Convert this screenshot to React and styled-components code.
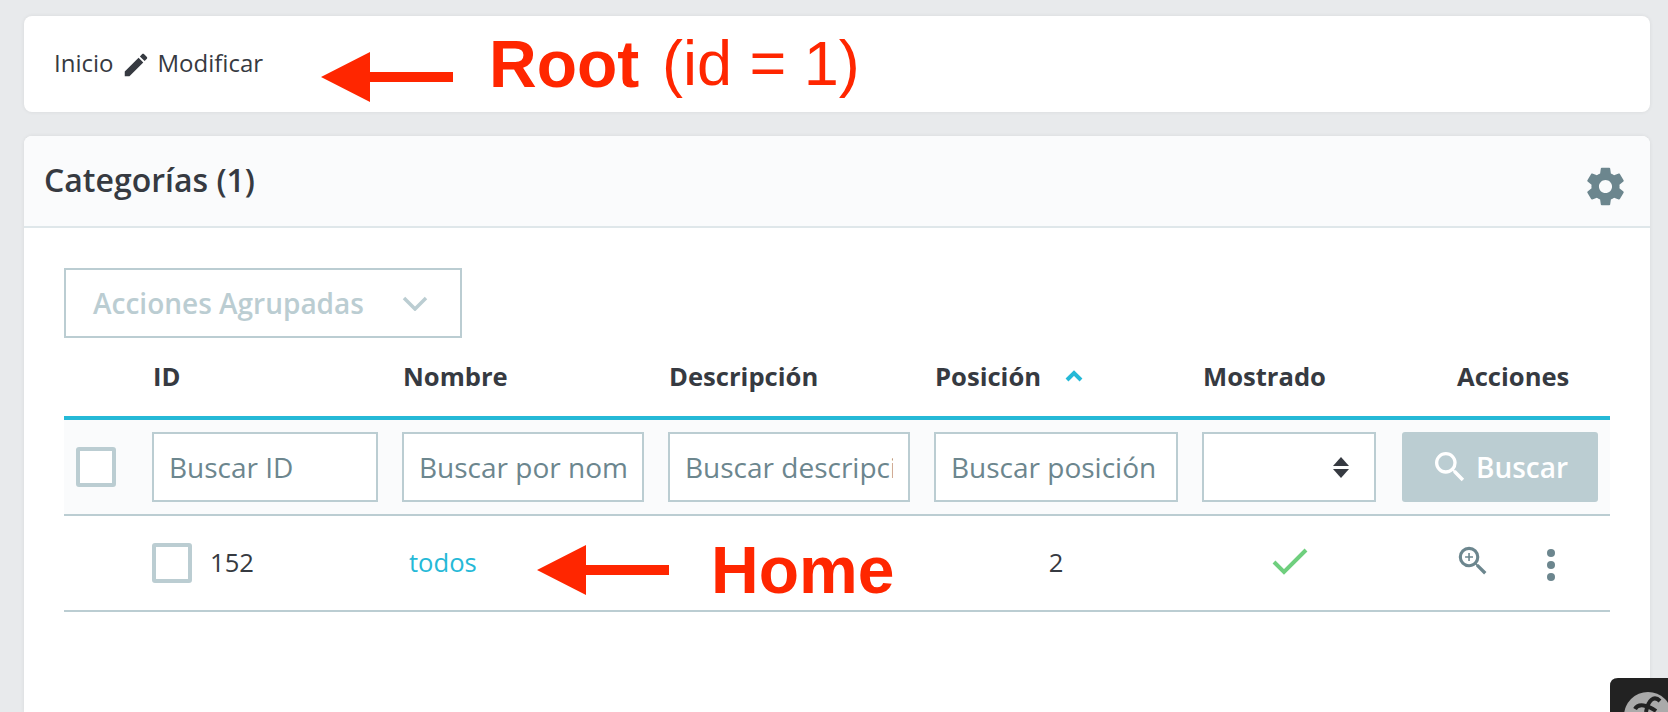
import styled, { createGlobalStyle, css } from "styled-components";

const GlobalStyle = createGlobalStyle`
    html, body {
        margin: 0;
        height: 712px;
        overflow: hidden;
        background: #e8eaec;
        font-family: "Open Sans", "Liberation Sans", sans-serif;
        color: #363a41;
    }
    * { box-sizing: border-box; }
`

const PAGE = styled.div`
    position: relative;
    height: 712px;
    padding: 16px 18px 0 24px;
    display: flex;
    flex-direction: column;
    gap: 24px;
    overflow: hidden;
`

const CARD = styled.section`
    background: #fff;
    border-radius: 8px;
    box-shadow: 0 0 4px rgba(0, 0, 0, .07);
`

const BREADCRUMB = styled(CARD)`
    height: 96px;
    padding: 0 30px 4px;
    display: flex;
    align-items: center;
    font-size: 24px;
`

const PENCIL = styled.svg`
    width: 30px;
    height: 30px;
    margin: 5px 6px 0 8px;
    fill: #363a41;
`

const LISTCARD = styled(CARD)`
    flex: 1;
    border-radius: 8px 8px 0 0;
`

const CARDHEADER = styled.header`
    height: 92px;
    padding: 0 21px 0 20px;
    display: flex;
    align-items: center;
    justify-content: space-between;
    background: #fafbfc;
    border-bottom: 2px solid #dfe7ea;
    border-radius: 8px 8px 0 0;
`

const TITLE = styled.h2`
    margin: 0 0 4px;
    font-size: 32px;
    font-weight: 600;
`

const GEAR = styled.svg`
    width: 45px;
    height: 45px;
    margin: 10px 1px 0 0;
    fill: #6c868e;
`

const CARDBODY = styled.div`
    padding: 40px 40px 0;
`

const BULK = styled.div`
    width: 398px;
    height: 70px;
    padding: 0 32px 0 27px;
    display: flex;
    align-items: center;
    justify-content: space-between;
    border: 2px solid #bbcdd2;
    font-size: 28px;
    font-weight: 600;
    color: #bbcdd2;
`

const columns = css`
    display: grid;
    grid-template-columns: 52px 226px 242px 242px 244px 176px 196px;
    column-gap: 24px;
    align-items: center;
    padding: 0 12px;
`

const HEADROW = styled.div`
    ${columns}
    height: 82px;
    padding-bottom: 2px;
    border-bottom: 4px solid #25b9d7;
    font-size: 25.6px;
    font-weight: 700;
`

const HEADCELL = styled.div`
    padding-left: ${(props) => props.$indent || 0}px;
    display: flex;
    align-items: center;
    gap: 24px;
`

const FILTERROW = styled.div`
    ${columns}
    height: 96px;
    background: #fafbfc;
    border-bottom: 2px solid #bbcdd2;
`

const CHECKBOX = styled.span`
    display: block;
    flex: none;
    width: 40px;
    height: 40px;
    background: #fff;
    border: 4px solid #bbcdd2;
    border-radius: 3px;
`

const ROWCHECKBOX = styled(CHECKBOX)`
    margin-top: 2px;
`

const SEARCHINPUT = styled.input`
    width: 100%;
    height: 70px;
    padding: 0 15px;
    background: #fff;
    border: 2px solid #bbcdd2;
    border-radius: 0;
    outline: none;
    font-family: inherit;
    font-size: 28px;
    color: #6c868e;

    &::placeholder {
        color: #6c868e;
        opacity: 1;
    }
`

const SORTSELECT = styled.div`
    width: 174px;
    height: 70px;
    padding-right: 25px;
    display: flex;
    flex-direction: column;
    align-items: flex-end;
    justify-content: center;
    gap: 3px;
    background: #fff;
    border: 2px solid #bbcdd2;
`

const CARET = styled.span`
    width: 0;
    height: 0;
    border-left: 8px solid transparent;
    border-right: 8px solid transparent;
    ${(props) => props.$up
        ? "border-bottom: 9px solid #363a41;"
        : "border-top: 9px solid #363a41;"}
`

const SEARCHBUTTON = styled.button`
    height: 70px;
    padding: 0 2px 0 0;
    display: flex;
    align-items: center;
    justify-content: center;
    gap: 6px;
    background: #bbcdd2;
    border: 0;
    border-radius: 3px;
    font-family: inherit;
    font-size: 28px;
    font-weight: 600;
    color: #fff;
`

const SEARCHICON = styled.svg`
    width: 40px;
    height: 40px;
    fill: #fff;
`

const DATAROW = styled.div`
    ${columns}
    height: 96px;
    padding-bottom: 2px;
    border-bottom: 2px solid #bbcdd2;
    font-size: 25.6px;
`

const IDCELL = styled.div`
    display: flex;
    align-items: center;
    gap: 18px;
`

const LINK = styled.a`
    padding-left: 7px;
    color: #25b9d7;
`

const CENTERED = styled.div`
    display: flex;
    justify-content: center;
`

const ROWACTIONS = styled.div`
    display: flex;
    align-items: center;
    padding-left: 52px;
    gap: 55px;
`

const ZOOMICON = styled.svg`
    width: 38px;
    height: 38px;
    margin-bottom: 2px;
    fill: #6c868e;
`

const DOTS = styled.svg`
    width: 8px;
    height: 32px;
    margin-top: 6px;
    fill: #6c868e;
`

const ANNOTATION = styled.div`
    position: absolute;
    left: ${(props) => props.$left}px;
    top: ${(props) => props.$top}px;
    font-family: "Liberation Sans", Arial, sans-serif;
    font-size: ${(props) => props.$size}px;
    font-weight: ${(props) => props.$weight || 400};
    line-height: 1;
    color: #ff2600;
    white-space: nowrap;
`

const ARROW = styled.svg`
    position: absolute;
    left: ${(props) => props.$left}px;
    top: ${(props) => props.$top}px;
    fill: #ff2600;
`

const PROFILERBADGE = styled.svg`
    position: absolute;
    right: 0;
    bottom: 0;
    width: 58px;
    height: 34px;
`

const pencilPath = "M3 17.25V21h3.75L17.81 9.94l-3.75-3.75L3 17.25zM20.71 7.04c.39-.39.39-1.02 0-1.41l-2.34-2.34c-.39-.39-1.02-.39-1.41 0l-1.83 1.83 3.75 3.75 1.83-1.83z"
const gearPath = "M19.43 12.98c.04-.32.07-.64.07-.98s-.03-.66-.07-.98l2.11-1.65c.19-.15.24-.42.12-.64l-2-3.46c-.12-.22-.39-.3-.61-.22l-2.49 1c-.52-.4-1.08-.73-1.69-.98l-.38-2.65C14.46 2.18 14.25 2 14 2h-4c-.25 0-.46.18-.49.42l-.38 2.65c-.61.25-1.17.59-1.69.98l-2.49-1c-.23-.09-.49 0-.61.22l-2 3.46c-.13.22-.07.49.12.64l2.11 1.65c-.04.32-.07.65-.07.98s.03.66.07.98l-2.11 1.65c-.19.15-.24.42-.12.64l2 3.46c.12.22.39.3.61.22l2.49-1c.52.4 1.08.73 1.69.98l.38 2.65c.03.24.24.42.49.42h4c.25 0 .46-.18.49-.42l.38-2.65c.61-.25 1.17-.59 1.69-.98l2.49 1c.23.09.49 0 .61-.22l2-3.46c.12-.22.07-.49-.12-.64l-2.11-1.65zM12 15.5c-1.93 0-3.5-1.57-3.5-3.5s1.57-3.5 3.5-3.5 3.5 1.57 3.5 3.5-1.57 3.5-3.5 3.5z"
const searchPath = "M15.5 14h-.79l-.28-.27A6.471 6.471 0 0 0 16 9.5 6.5 6.5 0 1 0 9.5 16c1.61 0 3.09-.59 4.23-1.57l.27.28v.79l5 4.99L20.49 19l-4.99-5zm-6 0C7.01 14 5 11.99 5 9.5S7.01 5 9.5 5 14 7.01 14 9.5 11.99 14 9.5 14z"
const zoomPlusPath = "M12 10h-2v2H9v-2H7V9h2V7h1v2h2v1z"

function Arrow ({left, top, width}) {
    return (
        <ARROW $left = {left} $top = {top} width = {width} height = "50" viewBox = {`0 0 ${width} 50`}>
            <path d = {`M0 25 L49 0 V20 H${width} V30 H49 V50 Z`} />
        </ARROW>
    )
}

function App () {
    const filters = ["Buscar ID", "Buscar por nombre", "Buscar descripción", "Buscar posición"]

    return (
        <PAGE>
            <GlobalStyle />
            <BREADCRUMB>
                Inicio
                <PENCIL viewBox = "0 0 24 24"><path d = {pencilPath} /></PENCIL>
                Modificar
            </BREADCRUMB>

            <LISTCARD>
                <CARDHEADER>
                    <TITLE>Categorías (1)</TITLE>
                    <GEAR viewBox = "0 0 24 24"><path d = {gearPath} /></GEAR>
                </CARDHEADER>
                <CARDBODY>
                    <BULK>
                        Acciones Agrupadas
                        <svg width = "26" height = "15" viewBox = "0 0 26 15" fill = "none" stroke = "#bbcdd2" strokeWidth = "3.5">
                            <path d = "M2 2 L13 13 L24 2" />
                        </svg>
                    </BULK>

                    <HEADROW>
                        <div />
                        <HEADCELL $indent = {1}>ID</HEADCELL>
                        <HEADCELL $indent = {1}>Nombre</HEADCELL>
                        <HEADCELL $indent = {1}>Descripción</HEADCELL>
                        <HEADCELL $indent = {1}>
                            Posición
                            <svg width = "18" height = "12" viewBox = "0 0 18 12" fill = "none" stroke = "#25b9d7" strokeWidth = "4">
                                <path d = "M2 10 L9 3 L16 10" />
                            </svg>
                        </HEADCELL>
                        <HEADCELL $indent = {1}>Mostrado</HEADCELL>
                        <HEADCELL $indent = {55}>Acciones</HEADCELL>
                    </HEADROW>

                    <FILTERROW>
                        <CHECKBOX />
                        {filters.map((filter) => (
                            <SEARCHINPUT key = {filter} placeholder = {filter} />
                        ))}
                        <SORTSELECT>
                            <CARET $up />
                            <CARET />
                        </SORTSELECT>
                        <SEARCHBUTTON>
                            <SEARCHICON viewBox = "0 0 24 24"><path d = {searchPath} /></SEARCHICON>
                            Buscar
                        </SEARCHBUTTON>
                    </FILTERROW>

                    <DATAROW>
                        <div />
                        <IDCELL><ROWCHECKBOX />152</IDCELL>
                        <LINK>todos</LINK>
                        <div />
                        <CENTERED>2</CENTERED>
                        <CENTERED>
                            <svg width = "36" height = "28" viewBox = "0 0 36 28" fill = "none" stroke = "#6fcf7e" strokeWidth = "4">
                                <path d = "M2 14 L12 24 L34 2" />
                            </svg>
                        </CENTERED>
                        <ROWACTIONS>
                            <ZOOMICON viewBox = "0 0 24 24">
                                <path d = {searchPath} />
                                <path d = {zoomPlusPath} />
                            </ZOOMICON>
                            <DOTS viewBox = "0 0 8 32">
                                <circle cx = "4" cy = "4" r = "4" />
                                <circle cx = "4" cy = "16" r = "4" />
                                <circle cx = "4" cy = "28" r = "4" />
                            </DOTS>
                        </ROWACTIONS>
                    </DATAROW>
                </CARDBODY>
            </LISTCARD>

            <Arrow left = {321} top = {52} width = {132} />
            <ANNOTATION $left = {489} $top = {31} $size = {66} $weight = {700}>Root</ANNOTATION>
            <ANNOTATION $left = {662} $top = {32} $size = {63}>(id = 1)</ANNOTATION>
            <Arrow left = {537} top = {545} width = {132} />
            <ANNOTATION $left = {711} $top = {537} $size = {66} $weight = {700}>Home</ANNOTATION>

            <PROFILERBADGE viewBox = "0 0 58 34">
                <path d = "M0 34 V8 Q0 0 8 0 H58 V34 Z" fill = "#222" />
                <circle cx = "38" cy = "38" r = "24" fill = "#aaa" />
                <path d = "M50 23 C44 17 38 22 36 34 M25 31 C28 25 38 27 46 33" fill = "none" stroke = "#222" strokeWidth = "4" />
            </PROFILERBADGE>
        </PAGE>
    )
}

export default App
